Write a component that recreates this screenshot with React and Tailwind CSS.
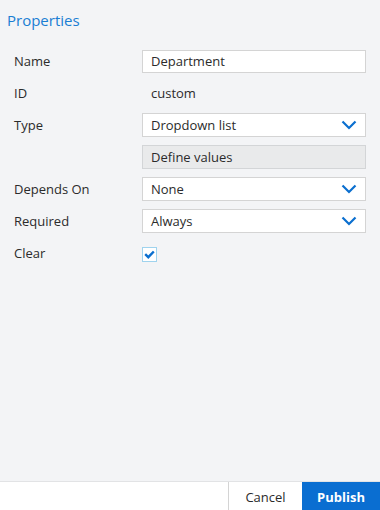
import React from 'react';

function Chevron() {
  return (
    <svg width="16" height="10" viewBox="0 0 16 10" className="shrink-0">
      <path d="M1.5 1.5 L8 8 L14.5 1.5" fill="none" stroke="#0b6fcf" strokeWidth="2.2" />
    </svg>
  );
}

function Row({ label, children }) {
  return (
    <div className="flex items-center h-[24px]">
      <div className="w-[142px] pl-[14px] pt-[2px] text-[13px] text-[#2b2b2b]">{label}</div>
      <div className="w-[224px] h-full flex items-center">{children}</div>
    </div>
  );
}

function Select({ value }) {
  return (
    <div className="w-full h-full bg-white border border-[#d4d4d4] flex items-center justify-between pl-[8px] pr-[8px] text-[13px] text-[#2b2b2b]">
      <span className="pt-[2px]">{value}</span>
      <Chevron />
    </div>
  );
}

export default function App() {
  const [clear, setClear] = React.useState(true);

  return (
    <div className="h-[510px] w-[380px] flex flex-col bg-[#f3f4f6]" style={{ fontFamily: '"Open Sans", "Noto Sans", sans-serif' }}>
      <div className="flex-1">
        <h2 className="pl-[7px] pt-[9px] text-[15px] text-[#1a7ed3] leading-[22px]">Properties</h2>
        <div className="mt-[18px] flex flex-col gap-2">
          <Row label="Name">
            <div className="w-full h-[23px] bg-white border border-[#d4d4d4] flex items-center pl-[8px] pt-[2px] text-[13px] text-[#2b2b2b]">
              Department
            </div>
          </Row>
          <Row label="ID">
            <span className="pl-[9px] pt-[2px] text-[13px] text-[#2b2b2b]">custom</span>
          </Row>
          <Row label="Type">
            <Select value="Dropdown list" />
          </Row>
          <Row label="">
            <div className="w-full h-full bg-[#e9eaeb] border border-[#d3d5d7] flex items-center pl-[8px] pt-[2px] text-[13px] text-[#2b2b2b]">
              Define values
            </div>
          </Row>
          <Row label="Depends On">
            <Select value="None" />
          </Row>
          <Row label="Required">
            <Select value="Always" />
          </Row>
          <Row label="Clear">
            <button
              onClick={() => setClear(!clear)}
              className="mt-[2px] w-[15px] h-[15px] bg-white border border-[#9fd3ee] flex items-center justify-center"
            >
              {clear && (
                <svg width="11" height="9" viewBox="0 0 11 9">
                  <path d="M1.2 4.2 L4.3 7.2 L9.8 1.5" fill="none" stroke="#0b6fcf" strokeWidth="2.4" />
                </svg>
              )}
            </button>
          </Row>
        </div>
      </div>
      <div className="h-[29px] bg-white border-t border-[#e2e3e5] flex justify-end">
        <button className="w-[74px] h-full pt-[3px] border-l border-[#d4d4d4] text-[13px] text-[#2b2b2b]">Cancel</button>
        <button className="w-[78px] h-full pt-[3px] bg-[#0a6ed1] text-white text-[13px] font-bold">Publish</button>
      </div>
    </div>
  );
}
